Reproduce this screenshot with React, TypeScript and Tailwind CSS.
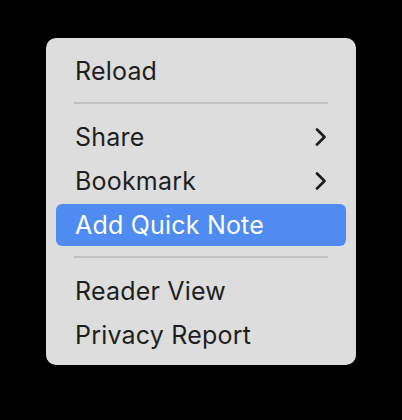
import { Fragment } from "react";

type Item = { label: string; sub?: boolean; active?: boolean } | "sep";

const items: Item[] = [
  { label: "Reload" },
  "sep",
  { label: "Share", sub: true },
  { label: "Bookmark", sub: true },
  { label: "Add Quick Note", active: true },
  "sep",
  { label: "Reader View" },
  { label: "Privacy Report" },
];

function Chevron() {
  return (
    <svg width="12" height="18" viewBox="0 0 12 18" fill="none" className="shrink-0">
      <path d="M2 1.5 L9.5 9 L2 16.5" stroke="#1c1c1c" strokeWidth="2.6" strokeLinecap="round" strokeLinejoin="round" />
    </svg>
  );
}

export default function App() {
  return (
    <div className="w-[402px] h-[420px] bg-black pt-[38px] pl-[46px] font-['Inter',sans-serif]">
      <div className="w-[310px] h-[327px] rounded-[10px] bg-[#dddddd] px-[10px] pt-[11px] pb-[8px] flex flex-col">
        {items.map((it, i) =>
          it === "sep" ? (
            <div key={i} className="h-[22px] pt-[9px] px-[18px]">
              <div className="h-[2px] bg-[#c2c2c2]" />
            </div>
          ) : (
            <Fragment key={i}>
              <div className="h-[44px] py-[1px]">
                <div
                  className={
                    "h-full rounded-[6px] flex items-center justify-between pl-[19px] pr-[19px] text-[25px] leading-none tracking-[0.2px] " +
                    (it.active ? "bg-[#4f8bf0] text-white" : "text-[#1f1f1f]")
                  }
                >
                  <span>{it.label}</span>
                  {it.sub && <Chevron />}
                </div>
              </div>
            </Fragment>
          )
        )}
      </div>
    </div>
  );
}
